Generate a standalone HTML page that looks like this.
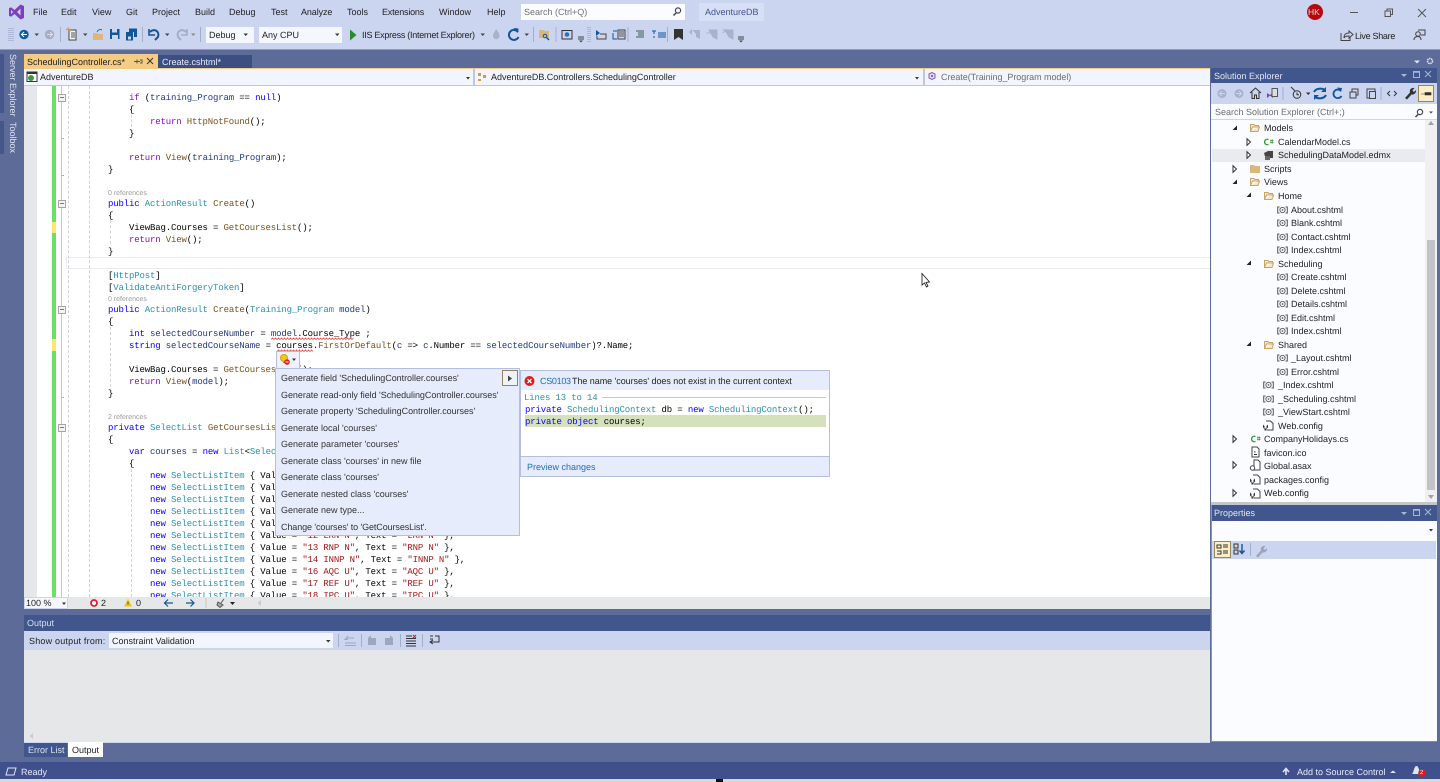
<!DOCTYPE html>
<html><head><meta charset="utf-8"><title>AdventureDB</title>
<style>
html,body{margin:0;padding:0;width:1440px;height:782px;overflow:hidden;background:#e6e7e8}
body{position:relative;font-family:"Liberation Sans",sans-serif;font-size:9px;color:#1e1e1e;text-rendering:geometricPrecision;filter:blur(.3px)}
.b{position:absolute}
.t{position:absolute;white-space:pre;line-height:12px;height:12px}
#code{position:absolute;left:24px;top:86px;width:1186px;height:511px;overflow:hidden;background:#fff}
#code .c{position:absolute;white-space:pre;font-family:"Liberation Mono",monospace;font-size:9px;letter-spacing:-.15px;line-height:12px;height:12px;color:#000;transform:translateY(1px)}
#code .r{position:absolute;font-size:7px;color:#999;line-height:10px;white-space:pre;transform:translateY(2px)}
.k{color:#0000ff}.p{color:#8f08c4}.y{color:#2b91af}.m{color:#74531f}.s{color:#a31515}.v{color:#1f377f}
.mono{font-family:"Liberation Mono",monospace;font-size:9px;letter-spacing:-.15px}
svg{position:absolute;left:0;top:0}
</style></head><body>

<!-- chrome backgrounds -->
<div class="b" style="left:0;top:0;width:1440px;height:49px;background:#ccd5f0"></div>
<div class="b" style="left:0;top:49px;width:1440px;height:1px;background:#8e9bbc"></div>
<div class="b" style="left:0;top:50px;width:1440px;height:712px;background:#5d6b99"></div>
<div class="b" style="left:0;top:762px;width:1440px;height:17px;background:#40508d"></div>
<div class="b" style="left:0;top:779px;width:1440px;height:3px;background:#d8d8d8"></div>

<!-- menu -->
<div class="t" style="left:33px;top:6px">File</div>
<div class="t" style="left:61px;top:6px">Edit</div>
<div class="t" style="left:92px;top:6px">View</div>
<div class="t" style="left:126px;top:6px">Git</div>
<div class="t" style="left:152px;top:6px">Project</div>
<div class="t" style="left:195px;top:6px">Build</div>
<div class="t" style="left:229px;top:6px">Debug</div>
<div class="t" style="left:271px;top:6px">Test</div>
<div class="t" style="left:301px;top:6px;letter-spacing:-.1px">Analyze</div>
<div class="t" style="left:347px;top:6px">Tools</div>
<div class="t" style="left:382px;top:6px;letter-spacing:-.2px">Extensions</div>
<div class="t" style="left:439px;top:6px">Window</div>
<div class="t" style="left:487px;top:6px">Help</div>
<div class="b" style="left:521px;top:4px;width:164px;height:16px;background:#fbfcff"></div>
<div class="t" style="left:524px;top:6px;color:#717171">Search (Ctrl+Q)</div>
<div class="b" style="left:699px;top:3px;width:65px;height:18px;background:#d7dff6"></div>
<div class="t" style="left:705px;top:6px;color:#44548c">AdventureDB</div>
<div class="b" style="left:1307px;top:4px;width:16px;height:16px;border-radius:50%;background:#b5090f"></div>
<div class="t" style="left:1308px;top:6px;color:#f5d5d5;font-size:8.5px">HK</div>

<!-- toolbar -->
<div class="b" style="left:206px;top:27px;width:48px;height:16px;background:#f5f7fe"></div>
<div class="t" style="left:209px;top:29px">Debug</div>
<div class="b" style="left:259px;top:27px;width:83px;height:16px;background:#f5f7fe"></div>
<div class="t" style="left:262px;top:29px">Any CPU</div>
<div class="t" style="left:362px;top:29px;letter-spacing:-.27px">IIS Express (Internet Explorer)</div>
<div class="t" style="left:1355px;top:30px;letter-spacing:-.3px">Live Share</div>

<!-- left rail -->
<div class="b" style="left:0;top:54px;width:4px;height:59px;background:#47568a"></div>
<div class="b" style="left:0;top:121px;width:4px;height:33px;background:#47568a"></div>
<div class="t" style="left:13px;top:54px;transform-origin:0 0;transform:rotate(90deg) translateY(-6px);color:#dfe4f2">Server Explorer</div>
<div class="t" style="left:13px;top:122px;transform-origin:0 0;transform:rotate(90deg) translateY(-6px);color:#dfe4f2">Toolbox</div>

<!-- doc tabs -->
<div class="b" style="left:24px;top:54px;width:134px;height:15px;background:#f5cc84"></div>
<div class="t" style="left:27px;top:56px">SchedulingController.cs*</div>
<div class="b" style="left:158px;top:55px;width:94px;height:13px;background:#3b4f81"></div>
<div class="t" style="left:162px;top:56px;color:#e6eaf6">Create.cshtml*</div>
<div class="b" style="left:24px;top:68px;width:1186px;height:1px;background:#f5cc84"></div>

<!-- nav bar -->
<div class="b" style="left:24px;top:69px;width:1186px;height:16px;background:#f2f5fd"></div>
<div class="b" style="left:24px;top:85px;width:1186px;height:1px;background:#bcc7e2"></div>
<div class="b" style="left:473px;top:69px;width:2px;height:16px;background:#bcc7e2"></div>
<div class="b" style="left:923px;top:69px;width:2px;height:16px;background:#bcc7e2"></div>
<div class="t" style="left:40px;top:71px">AdventureDB</div>
<div class="t" style="left:491px;top:71px;letter-spacing:-.02px">AdventureDB.Controllers.SchedulingController</div>
<div class="t" style="left:941px;top:71px;color:#6d6d6d;letter-spacing:-.05px">Create(Training_Program model)</div>

<!-- editor -->
<div id="code">
<div class="b" style="left:0;top:0;width:13px;height:511px;background:#e6e7e8"></div>
<div class="b" style="left:28px;top:0;width:4px;height:511px;background:#69e264"></div>
<div class="b" style="left:28px;top:136px;width:4px;height:11px;background:#fbe96a"></div>
<div class="b" style="left:28px;top:253px;width:4px;height:12px;background:#fbe96a"></div>
<div class="b" style="left:37px;top:0;width:1px;height:511px;background:#c6c6c6"></div>
<div class="b" style="left:42px;top:171px;width:1150px;height:10px;border:1px solid #e9e9ee;border-right:0"></div>
<div class="b" style="left:44px;top:0;height:511px;border-left:1px dashed #d2d2d2"></div>
<div class="b" style="left:65px;top:0;height:511px;border-left:1px dashed #d2d2d2"></div>
<div class="b" style="left:86px;top:134px;height:24px;border-left:1px dashed #d2d2d2"></div>
<div class="b" style="left:86px;top:241px;height:60px;border-left:1px dashed #d2d2d2"></div>
<div class="b" style="left:107px;top:29px;height:12px;border-left:1px dashed #d2d2d2"></div>
<div class="b" style="left:107px;top:383px;height:128px;border-left:1px dashed #d2d2d2"></div>
<div class="b" style="left:38px;top:52px;width:2px;height:1px;background:#aaa"></div>
<div class="b" style="left:38px;top:89px;width:2px;height:1px;background:#aaa"></div>
<div class="b" style="left:38px;top:311px;width:2px;height:1px;background:#aaa"></div>
<div class="b" style="left:34px;top:8px;width:6px;height:6px;border:1px solid #a5a5a5;background:#f4f4f4"></div>
<div class="b" style="left:34px;top:114px;width:6px;height:6px;border:1px solid #a5a5a5;background:#f4f4f4"></div>
<div class="b" style="left:34px;top:220px;width:6px;height:6px;border:1px solid #a5a5a5;background:#f4f4f4"></div>
<div class="b" style="left:34px;top:338px;width:6px;height:6px;border:1px solid #a5a5a5;background:#f4f4f4"></div>
<div class="b" style="left:36px;top:11px;width:4px;height:1px;background:#777"></div>
<div class="b" style="left:36px;top:117px;width:4px;height:1px;background:#777"></div>
<div class="b" style="left:36px;top:223px;width:4px;height:1px;background:#777"></div>
<div class="b" style="left:36px;top:341px;width:4px;height:1px;background:#777"></div>

<div class="c" style="left:105px;top:5px"><span class="p">if</span> (<span class="v">training_Program</span> == <span class="k">null</span>)</div>
<div class="c" style="left:105px;top:17px">{</div>
<div class="c" style="left:126px;top:29px"><span class="p">return</span> <span class="m">HttpNotFound</span>();</div>
<div class="c" style="left:105px;top:41px">}</div>
<div class="c" style="left:105px;top:65px"><span class="p">return</span> <span class="m">View</span>(<span class="v">training_Program</span>);</div>
<div class="c" style="left:84px;top:77px">}</div>
<div class="r" style="left:84px;top:101px">0 references</div>
<div class="c" style="left:84px;top:111px"><span class="k">public</span> <span class="y">ActionResult</span> <span class="m">Create</span>()</div>
<div class="c" style="left:84px;top:123px">{</div>
<div class="c" style="left:105px;top:135px">ViewBag.Courses = <span class="m">GetCoursesList</span>();</div>
<div class="c" style="left:105px;top:147px"><span class="p">return</span> <span class="m">View</span>();</div>
<div class="c" style="left:84px;top:159px">}</div>
<div class="c" style="left:84px;top:183px">[<span class="y">HttpPost</span>]</div>
<div class="c" style="left:84px;top:195px">[<span class="y">ValidateAntiForgeryToken</span>]</div>
<div class="r" style="left:84px;top:207px">0 references</div>
<div class="c" style="left:84px;top:217px"><span class="k">public</span> <span class="y">ActionResult</span> <span class="m">Create</span>(<span class="y">Training_Program</span> <span class="v">model</span>)</div>
<div class="c" style="left:84px;top:229px">{</div>
<div class="c" style="left:105px;top:241px"><span class="k">int</span> <span class="v">selectedCourseNumber</span> = <span class="v">model</span>.Course_Type ;</div>
<div class="c" style="left:105px;top:253px"><span class="k">string</span> <span class="v">selectedCourseName</span> = courses.<span class="m">FirstOrDefault</span>(<span class="v">c</span> =&gt; <span class="v">c</span>.Number == <span class="v">selectedCourseNumber</span>)?.Name;</div>
<div class="c" style="left:105px;top:277px">ViewBag.Courses = <span class="m">GetCoursesList</span>();</div>
<div class="c" style="left:105px;top:289px"><span class="p">return</span> <span class="m">View</span>(<span class="v">model</span>);</div>
<div class="c" style="left:84px;top:301px">}</div>
<div class="r" style="left:84px;top:325px">2 references</div>
<div class="c" style="left:84px;top:335px"><span class="k">private</span> <span class="y">SelectList</span> <span class="m">GetCoursesList</span>()</div>
<div class="c" style="left:84px;top:347px">{</div>
<div class="c" style="left:105px;top:359px"><span class="k">var</span> <span class="v">courses</span> = <span class="k">new</span> <span class="y">List</span>&lt;<span class="y">SelectListItem</span>&gt;()</div>
<div class="c" style="left:105px;top:371px">{</div>
<div class="c" style="left:126px;top:383px"><span class="k">new</span> <span class="y">SelectListItem</span> { Value = <span class="s">"1 ABC N"</span>, Text = <span class="s">"ABC N"</span> },</div>
<div class="c" style="left:126px;top:395px"><span class="k">new</span> <span class="y">SelectListItem</span> { Value = <span class="s">"2 ABC U"</span>, Text = <span class="s">"ABC U"</span> },</div>
<div class="c" style="left:126px;top:407px"><span class="k">new</span> <span class="y">SelectListItem</span> { Value = <span class="s">"3 DEF N"</span>, Text = <span class="s">"DEF N"</span> },</div>
<div class="c" style="left:126px;top:419px"><span class="k">new</span> <span class="y">SelectListItem</span> { Value = <span class="s">"4 DEF U"</span>, Text = <span class="s">"DEF U"</span> },</div>
<div class="c" style="left:126px;top:431px"><span class="k">new</span> <span class="y">SelectListItem</span> { Value = <span class="s">"5 GHI N"</span>, Text = <span class="s">"GHI N"</span> },</div>
<div class="c" style="left:126px;top:443px"><span class="k">new</span> <span class="y">SelectListItem</span> { Value = <span class="s">"12 LRN N"</span>, Text = <span class="s">"LRN N"</span> },</div>
<div class="c" style="left:126px;top:455px"><span class="k">new</span> <span class="y">SelectListItem</span> { Value = <span class="s">"13 RNP N"</span>, Text = <span class="s">"RNP N"</span> },</div>
<div class="c" style="left:126px;top:467px"><span class="k">new</span> <span class="y">SelectListItem</span> { Value = <span class="s">"14 INNP N"</span>, Text = <span class="s">"INNP N"</span> },</div>
<div class="c" style="left:126px;top:479px"><span class="k">new</span> <span class="y">SelectListItem</span> { Value = <span class="s">"16 AQC U"</span>, Text = <span class="s">"AQC U"</span> },</div>
<div class="c" style="left:126px;top:491px"><span class="k">new</span> <span class="y">SelectListItem</span> { Value = <span class="s">"17 REF U"</span>, Text = <span class="s">"REF U"</span> },</div>
<div class="c" style="left:126px;top:503px"><span class="k">new</span> <span class="y">SelectListItem</span> { Value = <span class="s">"18 IPC U"</span>, Text = <span class="s">"IPC U"</span> },</div>
</div>

<!-- editor status -->
<div class="b" style="left:24px;top:597px;width:1186px;height:12px;background:#e6e7e8"></div>
<div class="b" style="left:24px;top:597px;width:44px;height:12px;background:#f6f7fd;box-shadow:inset 0 0 0 1px #ccd5f0"></div>
<div class="t" style="left:26px;top:597px">100 %</div>
<div class="t" style="left:101px;top:597px">2</div>
<div class="t" style="left:136px;top:597px">0</div>

<!-- output panel -->
<div class="b" style="left:24px;top:615px;width:1186px;height:16px;background:#40568d"></div>
<div class="t" style="left:27px;top:617px;color:#d9dfee">Output</div>
<div class="b" style="left:24px;top:631px;width:1186px;height:19px;background:#ccd5f0"></div>
<div class="t" style="left:29px;top:635px;letter-spacing:.2px">Show output from:</div>
<div class="b" style="left:109px;top:633px;width:224px;height:15px;background:#f2f5fd"></div>
<div class="t" style="left:112px;top:635px">Constraint Validation</div>
<div class="b" style="left:24px;top:650px;width:1186px;height:92px;background:#e6e7e8"></div>
<div class="b" style="left:24px;top:742px;width:1186px;height:1px;background:#ccd5f0"></div>
<div class="b" style="left:24px;top:743px;width:43px;height:14px;background:#40568d"></div>
<div class="t" style="left:28px;top:744px;color:#dfe4f2">Error List</div>
<div class="b" style="left:68px;top:742px;width:35px;height:15px;background:#fff"></div>
<div class="t" style="left:72px;top:744px">Output</div>

<!-- solution explorer -->
<div class="b" style="left:1211px;top:68px;width:226px;height:435px;background:#fbfcff"></div>
<div class="b" style="left:1211px;top:68px;width:226px;height:15px;background:#40568d"></div>
<div class="t" style="left:1214px;top:70px;color:#e3e7f3">Solution Explorer</div>
<div class="b" style="left:1211px;top:83px;width:226px;height:21px;background:#ccd5f0"></div>
<div class="t" style="left:1215px;top:106px;color:#6d6d6d">Search Solution Explorer (Ctrl+;)</div>
<div class="b" style="left:1211px;top:119px;width:226px;height:1px;background:#ccd5f0"></div>
<div class="b" style="left:1212px;top:149px;width:213px;height:13px;background:#eaebf0"></div>
<div class="b" style="left:1425px;top:120px;width:12px;height:382px;background:#f0f0f3"></div>
<div class="b" style="left:1427px;top:240px;width:8px;height:250px;background:#c2c3c9"></div>
<div class="b" style="left:1211px;top:502px;width:226px;height:3px;background:#c4c6ce"></div>

<div class="t" style="left:1264px;top:122px">Models</div>
<div class="t" style="left:1278px;top:136px">CalendarModel.cs</div>
<div class="t" style="left:1278px;top:149px">SchedulingDataModel.edmx</div>
<div class="t" style="left:1264px;top:163px">Scripts</div>
<div class="t" style="left:1264px;top:176px">Views</div>
<div class="t" style="left:1278px;top:190px">Home</div>
<div class="t" style="left:1291px;top:204px">About.cshtml</div>
<div class="t" style="left:1291px;top:217px">Blank.cshtml</div>
<div class="t" style="left:1291px;top:231px">Contact.cshtml</div>
<div class="t" style="left:1291px;top:244px">Index.cshtml</div>
<div class="t" style="left:1278px;top:258px">Scheduling</div>
<div class="t" style="left:1291px;top:271px">Create.cshtml</div>
<div class="t" style="left:1291px;top:285px">Delete.cshtml</div>
<div class="t" style="left:1291px;top:298px">Details.cshtml</div>
<div class="t" style="left:1291px;top:312px">Edit.cshtml</div>
<div class="t" style="left:1291px;top:325px">Index.cshtml</div>
<div class="t" style="left:1278px;top:339px">Shared</div>
<div class="t" style="left:1291px;top:352px">_Layout.cshtml</div>
<div class="t" style="left:1291px;top:366px">Error.cshtml</div>
<div class="t" style="left:1278px;top:379px">_Index.cshtml</div>
<div class="t" style="left:1278px;top:393px">_Scheduling.cshtml</div>
<div class="t" style="left:1278px;top:406px">_ViewStart.cshtml</div>
<div class="t" style="left:1278px;top:420px">Web.config</div>
<div class="t" style="left:1264px;top:433px">CompanyHolidays.cs</div>
<div class="t" style="left:1264px;top:447px">favicon.ico</div>
<div class="t" style="left:1264px;top:460px">Global.asax</div>
<div class="t" style="left:1264px;top:474px">packages.config</div>
<div class="t" style="left:1264px;top:487px">Web.config</div>

<!-- properties -->
<div class="b" style="left:1211px;top:505px;width:226px;height:237px;background:#fbfcff"></div>
<div class="b" style="left:1211px;top:505px;width:226px;height:16px;background:#40568d"></div>
<div class="t" style="left:1214px;top:507px;color:#e3e7f3">Properties</div>
<div class="b" style="left:1212px;top:541px;width:224px;height:18px;background:#ccd5f0"></div>
<div class="b" style="left:1211px;top:741px;width:226px;height:1px;background:#8a8a8a"></div>
<div class="b" style="left:1211px;top:505px;width:1px;height:237px;background:#8f95a8"></div>

<!-- status bar -->
<div class="t" style="left:21px;top:766px;color:#e6eaf6">Ready</div>
<div class="t" style="left:1297px;top:766px;color:#e6eaf6">Add to Source Control</div>

<svg width="1440" height="782" viewBox="0 0 1440 782" fill="none">
<defs>
<symbol id="of" viewBox="0 0 10 10" overflow="visible"><path d="M.5 8.5V1.5H4L5 2.5H8.5V4M.5 8.5H8L9.5 4H2.5L.5 8.5Z" stroke="#c9a368" fill="#f6e7c8"/></symbol>
<symbol id="cf" viewBox="0 0 10 10" overflow="visible"><path d="M0 1H4L5 2H10V9H0Z" fill="#dcb67a"/></symbol>
<symbol id="rz" viewBox="0 0 11 10" overflow="visible"><path d="M2.5 2H.7V8H2.5M8.5 2H10.3V8H8.5" stroke="#555"/><circle cx="5.5" cy="5" r="2.6" stroke="#666"/><circle cx="5.5" cy="5" r=".9" fill="#666"/></symbol>
<symbol id="cfg" viewBox="0 0 11 11" overflow="visible"><path d="M3 1H7.5L10 3.5V10H4" stroke="#444" fill="#fff"/><path d="M0 4.5L1.5 6V8.5H3.5V6L5 4.5V7.5L3.5 9V10.5H1.5V9L0 7.5Z" fill="#333"/></symbol>
<symbol id="cs" viewBox="0 0 10 10" overflow="visible"><path d="M4.5 2.6A2.7 2.7 0 1 0 4.5 7.4" stroke="#3a9b35" stroke-width="1.3"/><path d="M6 3.5H9.5M6 5.5H9.5M7 2.5V6.5M8.5 2.5V6.5" stroke="#3a9b35" stroke-width=".7"/></symbol>
<symbol id="open" viewBox="0 0 6 6" overflow="visible"><path d="M5 0.5V5H.5Z" fill="#222"/></symbol>
<symbol id="shut" viewBox="0 0 6 8" overflow="visible"><path d="M1 .7L4.5 4L1 7.3Z" stroke="#333" fill="#fff"/></symbol>
</defs>

<!-- logo -->
<path d="M20.5 4.5L24 6V18L20.5 19.5L14.5 14L11 16.8L9 15.8V8.2L11 7.2L14.5 10ZM20.5 8.5L17 12L20.5 15.5ZM11 9.8V14.2L13 12Z" fill="#7d3fbf" fill-rule="evenodd"/>

<!-- search -->
<circle cx="678" cy="10.5" r="2.6" stroke="#444" stroke-width="1.2"/><path d="M676 13L673.5 15.5" stroke="#444" stroke-width="1.5"/>

<!-- window controls -->
<path d="M1350 12.5H1358" stroke="#555"/>
<path d="M1385 11h5.500v5.500H1385ZM1387 11V9h5.500v5.500h-2" stroke="#555"/>
<path d="M1418 9L1426 17M1426 9L1418 17" stroke="#555"/>

<!-- toolbar grip -->
<path d="M9 28V41M11 28V41M13 28V41" stroke="#8f9ac0" stroke-dasharray="1 1"/>
<circle cx="24" cy="34.5" r="4.7" fill="#0e5c9e"/><path d="M27 34.5H22M24 32L21.5 34.5L24 37" stroke="#fff"/>
<path d="M34.5 33.5H39L36.7 36Z" fill="#444"/>
<circle cx="49.5" cy="34.5" r="4.7" fill="#a5adc3"/><path d="M47 34.5H52M50 32L52.5 34.5L50 37" stroke="#dde"/>
<path d="M60.5 27V42" stroke="#a3aecb"/>
<path d="M69 30H76V40H69Z" stroke="#444" fill="#f4f4f4"/><path d="M71 33H75M71 35H75M71 37H75" stroke="#555"/><path d="M68 27.5L70 31.5M66 29.5H71" stroke="#d99c33" stroke-width="1.3"/>
<path d="M83 33.5H87.5L85.2 36Z" fill="#444"/>
<path d="M93 40V33H97L98 34H103V40Z" fill="#dcb67a"/><path d="M97 32C98 29.5 100 29 102 30" stroke="#0e70c0"/>
<path d="M110 29H119.5V39H110Z" fill="#11559a"/><rect x="112" y="29" width="5" height="3.5" fill="#ccd5f0"/><rect x="112" y="35" width="6" height="4" fill="#ccd5f0"/>
<path d="M126 32H133V40.5H126Z" fill="#11559a"/><path d="M129 28.5H137V37H134V32H129Z" fill="#11559a"/><rect x="128" y="36.5" width="3" height="3" fill="#ccd5f0"/>
<path d="M142.5 27V42" stroke="#a3aecb"/>
<path d="M150 32C154 28 160 31 158 37L155 40" stroke="#11559a" stroke-width="2"/><path d="M149 29V35H155" stroke="#11559a" stroke-width="1.6"/>
<path d="M165 33.5H169.5L167.2 36Z" fill="#444"/>
<path d="M186 32C182 28 176 31 178 37L181 40" stroke="#a5adc3" stroke-width="2"/><path d="M187 29V35H181" stroke="#a5adc3" stroke-width="1.6"/>
<path d="M191 33.5H195.5L193.2 36Z" fill="#888"/>
<path d="M200.5 27V42" stroke="#a3aecb"/>
<path d="M243.5 33.5H248L245.7 36Z" fill="#333"/>
<path d="M335 33.5H339.5L337.2 36Z" fill="#333"/>
<path d="M350 29.5L356.5 35L350 40.5Z" fill="#2b8a2b"/>
<path d="M480.5 33.5H485L482.7 36Z" fill="#444"/>
<path d="M496 29C498 32 499.500 33 499.500 36A3 3 0 0 1 493 36C493 33 495 32 496 29Z" fill="#aab2c8"/>
<path d="M518 32A5 5 0 1 0 518.500 37" stroke="#11559a" stroke-width="2"/><path d="M513.500 28L518.500 28.500L518 33" fill="#11559a"/>
<path d="M524.500 33.500H529L526.700 36Z" fill="#444"/>
<path d="M533.500 27V42" stroke="#a3aecb"/>
<path d="M539 30H544L545 31H549V38H539Z" fill="#dcb67a"/><circle cx="545" cy="36" r="1.800" stroke="#11559a"/><path d="M546.500 37.500L549 40" stroke="#11559a" stroke-width="1.400"/>
<path d="M556 27V42" stroke="#a3aecb"/>
<rect x="562" y="30.500" width="10" height="8.500" stroke="#333"/><circle cx="567" cy="34.500" r="2.300" fill="#2674b5"/>
<path d="M578 37H584M578 39H584" stroke="#444"/><path d="M579 40.500H583L581 42.500Z" fill="#444"/>
<path d="M588 27V42M590 27V42" stroke="#8f9ac0" stroke-dasharray="1 1"/>
<path d="M596 30L600 33L596 36Z" fill="#11559a"/><path d="M600 34H606V39H597V36" stroke="#444"/>
<path d="M613 33V39H617M613 31H617" stroke="#11559a"/><rect x="618" y="30" width="7" height="9" stroke="#444"/><path d="M619 32H624M619 34H624M619 36H624" stroke="#555"/>
<path d="M628 27V42" stroke="#a3aecb"/>
<path d="M636 31H644M638 33H644M638 35H644M636 37H644" stroke="#3e5e4e"/>
<path d="M652 31H656M654 31V34M658 33H666M658 35H666M658 37H666M654 36V38" stroke="#11559a"/>
<path d="M667.500 27V42" stroke="#a3aecb"/>
<path d="M674 29H683V40L678.500 37L674 40Z" fill="#333"/>
<path d="M692 30H700V39L696 37V34M689 32L692 29L692 35Z" fill="#a9b2c9"/>
<path d="M709 30H717V39L713 37ZM706 33H710" fill="#a9b2c9" stroke="#a9b2c9"/>
<path d="M725 30H733V39L729 37ZM723 29L727 33M727 29L723 33" fill="#a9b2c9" stroke="#a9b2c9"/>
<path d="M738 37H744M738 39H744" stroke="#444"/><path d="M739 40.500H743L741 42.500Z" fill="#444"/>

<!-- live share & feedback -->
<path d="M1341 33V40.500H1350V37" stroke="#444"/><path d="M1344 38C1344 34 1346 33 1349 33V31L1353 34.500L1349 38V36C1347 36 1345 36 1344 38Z" stroke="#444" fill="#ccd5f0"/>
<path d="M1418 30H1425V35H1421" stroke="#444"/><circle cx="1418" cy="34" r="2.300" stroke="#444"/><path d="M1414 40C1414 37 1416 36.500 1418 36.500C1420 36.500 1421 38 1421 40" stroke="#444"/>

<!-- top right arrows -->
<path d="M1414 60.500H1420L1417 63.500Z" fill="#dfe4f2"/>
<circle cx="1430" cy="61" r="2.500" stroke="#dfe4f2" stroke-width="1.500" stroke-dasharray="1.500 .6"/>

<!-- tab icons -->
<path d="M134 61.500H137M137 59.500V63.500M137 61.500H140M140 60H142V63H140" stroke="#555"/>
<path d="M147 58L153 64M153 58L147 64" stroke="#333"/>

<!-- nav bar icons -->
<rect x="27" y="72" width="10" height="9.500" fill="#fff" stroke="#333"/><rect x="27" y="72" width="10" height="2" fill="#333"/><circle cx="31" cy="78" r="3" fill="#3d9a43"/>
<path d="M466 77H470L468 79.500Z" fill="#333"/>
<path d="M915 77H919L917 79.500Z" fill="#333"/>
<path d="M478 73H481V76H478ZM483 75H486V78H483ZM478 79H481V81H478Z" fill="#d79a3a"/>
<path d="M929 74L932 72.500L935 74V78L932 79.500L929 78Z" stroke="#7d5bb5" fill="#e9def8"/><circle cx="932" cy="76" r="1.100" fill="#7d5bb5"/>

<!-- squiggles -->
<path d="M271 339.500l1.500-1.500 1.500 1.500 1.500-1.500 1.500 1.500 1.500-1.500 1.500 1.500 1.500-1.500 1.500 1.500 1.500-1.500 1.500 1.500 1.500-1.500 1.500 1.500 1.500-1.500 1.500 1.500 1.500-1.500 1.500 1.500 1.500-1.500 1.500 1.500 1.500-1.500 1.500 1.500 1.500-1.500 1.500 1.500 1.500-1.500 1.500 1.500 1.500-1.500 1.500 1.500 1.500-1.500 1.500 1.500 1.500-1.500 1.500 1.500 1.500-1.500 1.500 1.500 1.500-1.500 1.500 1.500 1.500-1.500 1.500 1.500 1.500-1.500 1.500 1.500 1.500-1.500 1.500 1.500 1.500-1.500 1.500 1.500 1.500-1.500 1.500 1.500 1.500-1.500 1.500 1.500 1.500-1.500 1.500 1.500 1.500-1.500 1.500 1.500 1.500-1.500 1.500 1.500 1.500-1.500 1.500 1.500 1.500-1.500" stroke="#e8534e" stroke-width=".8"/>
<path d="M277 351.500l1.500-1.500 1.500 1.500 1.500-1.500 1.500 1.500 1.500-1.500 1.500 1.500 1.500-1.500 1.500 1.500 1.500-1.500 1.500 1.500 1.500-1.500 1.500 1.500 1.500-1.500 1.500 1.500 1.500-1.500 1.500 1.500 1.500-1.500 1.500 1.500 1.500-1.500 1.500 1.500 1.500-1.500 1.500 1.500 1.500-1.500 1.500 1.500" stroke="#e8534e" stroke-width=".8"/>

<!-- editor status icons -->
<path d="M62 602.500H66L64 605Z" fill="#333"/>
<circle cx="94" cy="603" r="3" stroke="#d8232a" stroke-width="1.800" fill="#fff"/>
<path d="M128 599L132 606.500H124Z" fill="#f2c40f"/><path d="M128 601.500V604.500" stroke="#333" stroke-width=".8"/>
<path d="M173 603H164M168 599.500L164.500 603L168 606.500" stroke="#11559a" stroke-width="1.200"/>
<path d="M186 603H194M190.500 599.500L194 603L190.500 606.500" stroke="#11559a" stroke-width="1.200"/>
<path d="M206 598V608" stroke="#c6c6c6"/>
<path d="M224 599L221 603M218 602L223 605L220 607.500L217 605Z" stroke="#555" fill="#aaa"/>
<path d="M230 602H235L232.500 605Z" fill="#222"/>
<path d="M261 600V606L257.500 603Z" fill="#ccc"/>

<!-- output toolbar icons -->
<path d="M326 640H330.500L328.200 642.500Z" fill="#333"/>
<path d="M338.500 634V647M361.500 634V647M400.500 634V647M422.500 634V647" stroke="#a3aecb"/>
<path d="M348 636L345 639.500H348M347 638H354M345 643H356M345 645.500H356" stroke="#9ea7be"/>
<path d="M368 638L371 635V638H376V645H368Z" fill="#9ea7be"/>
<path d="M385 638H390V635L393 638V645H385Z" fill="#9ea7be"/>
<path d="M406 636H412M406 638.500H416M406 641H416M406 643.500H416M406 646H416" stroke="#333"/><path d="M413 635L416 638M416 635L413 638" stroke="#c22"/>
<path d="M430 636H433M430 639H433M435 636H439V642H431M433 640L430 642L433 644" stroke="#333"/>

<!-- output scroll -->
<path d="M33 733V739L29.500 736Z" fill="#ccc"/>

<!-- solution explorer icons -->
<path d="M1401 74H1407L1404 77Z" fill="#a8b5d6"/>
<rect x="1413.500" y="71.500" width="6" height="6" stroke="#a8b5d6"/><path d="M1413 72H1420" stroke="#a8b5d6" stroke-width="1.500"/>
<path d="M1425 71L1431 77M1431 71L1425 77" stroke="#a8b5d6"/>
<circle cx="1222" cy="93.500" r="4.500" fill="#a9b2c9"/><path d="M1225 93.500H1220M1222 91L1219.500 93.500L1222 96" stroke="#ccd5f0"/>
<circle cx="1239" cy="93.500" r="4.500" fill="#a9b2c9"/><path d="M1236 93.500H1241M1239 91L1241.500 93.500L1239 96" stroke="#ccd5f0"/>
<path d="M1250 93L1255.500 88L1261 93M1252 92V98.500H1254.500V95H1256.500V98.500H1259V92" stroke="#333"/>
<path d="M1267 93L1270 95L1273 92.500V98L1270 95.500L1267 98Z" fill="#7d3fbf"/><rect x="1272" y="88.500" width="5.500" height="8" stroke="#555" fill="#ddd"/>
<path d="M1283 87V100M1381 87V100" stroke="#a3aecb"/>
<circle cx="1297" cy="94.500" r="3.800" stroke="#333"/><path d="M1297 92.500V94.800H1299M1291 87L1295 91" stroke="#333"/>
<path d="M1306 92.500H1310.500L1308.200 95Z" fill="#333"/>
<path d="M1314 92C1316 88 1322 88 1325 90M1326 95C1324 99 1318 99 1315 97" stroke="#11559a" stroke-width="2"/><path d="M1326 87V92H1321ZM1314 100V95H1319Z" fill="#11559a"/>
<path d="M1341 91A4.300 4.300 0 1 0 1341.500 96" stroke="#11559a" stroke-width="1.800"/><path d="M1337 87.500L1342 88L1341 92Z" fill="#11559a"/>
<rect x="1350" y="92" width="6" height="6" stroke="#444"/><path d="M1352 92V89H1358V95H1356" stroke="#444"/>
<rect x="1367" y="89" width="8" height="9" stroke="#444"/><rect x="1369.500" y="91.500" width="6" height="7" stroke="#444" fill="#ccd5f0"/>
<path d="M1390 91L1387.500 93.500L1390 96M1394 91L1396.500 93.500L1394 96" stroke="#333"/>
<path d="M1405 98L1410 92.500C1409 89 1412 87.500 1414.500 88L1412.500 90.500L1414 92L1416 90C1416.500 93 1414 95 1411.500 94.500L1407 99.500Z" fill="#333"/>
<rect x="1418.500" y="85.500" width="15" height="16" stroke="#9d8450" fill="#fbeec9"/>
<path d="M1421 94H1425M1425 92.500H1431V95H1425Z" fill="#333" stroke="#333" stroke-width=".6"/>
<circle cx="1420" cy="112" r="2.600" stroke="#444" stroke-width="1.200"/><path d="M1418 114.500L1415.500 117" stroke="#444" stroke-width="1.500"/>
<path d="M1429 111.500H1433L1431 113.500Z" fill="#444"/>
<path d="M1431 121L1428 125H1434Z" fill="#9ea1aa"/>
<path d="M1428 495H1434L1431 499Z" fill="#9ea1aa"/>

<!-- tree icons -->
<use href="#open" x="1232" y="125" width="6" height="6"/><use href="#of" x="1250" y="123" width="10" height="10"/>
<use href="#shut" x="1246" y="138" width="6" height="8"/><use href="#cs" x="1264" y="137" width="10" height="10"/>
<use href="#shut" x="1246" y="151" width="6" height="8"/>
<path d="M1264 153L1268 151V160H1266ZM1268 151H1273V158H1268Z" fill="#444"/><path d="M1265 156H1270V160H1265Z" fill="#666"/>
<use href="#shut" x="1232" y="165" width="6" height="8"/><use href="#cf" x="1250" y="164" width="10" height="10"/>
<use href="#open" x="1232" y="179" width="6" height="6"/><use href="#of" x="1250" y="177" width="10" height="10"/>
<use href="#open" x="1246" y="192" width="6" height="6"/><use href="#of" x="1264" y="191" width="10" height="10"/>
<use href="#rz" x="1277" y="205" width="11" height="10"/>
<use href="#rz" x="1277" y="218" width="11" height="10"/>
<use href="#rz" x="1277" y="232" width="11" height="10"/>
<use href="#rz" x="1277" y="245" width="11" height="10"/>
<use href="#open" x="1246" y="260" width="6" height="6"/><use href="#of" x="1264" y="259" width="10" height="10"/>
<use href="#rz" x="1277" y="272" width="11" height="10"/>
<use href="#rz" x="1277" y="286" width="11" height="10"/>
<use href="#rz" x="1277" y="299" width="11" height="10"/>
<use href="#rz" x="1277" y="313" width="11" height="10"/>
<use href="#rz" x="1277" y="326" width="11" height="10"/>
<use href="#open" x="1246" y="341" width="6" height="6"/><use href="#of" x="1264" y="340" width="10" height="10"/>
<use href="#rz" x="1277" y="353" width="11" height="10"/>
<use href="#rz" x="1277" y="367" width="11" height="10"/>
<use href="#rz" x="1263" y="380" width="11" height="10"/>
<use href="#rz" x="1263" y="394" width="11" height="10"/>
<use href="#rz" x="1263" y="407" width="11" height="10"/>
<use href="#cfg" x="1263" y="420" width="11" height="11"/>
<use href="#shut" x="1232" y="435" width="6" height="8"/><use href="#cs" x="1251" y="434" width="10" height="10"/>
<path d="M1252 447H1257L1259 449V457H1252Z" stroke="#444" fill="#fff"/><path d="M1254 452H1255.500M1254 454.500H1257" stroke="#333"/>
<use href="#shut" x="1232" y="461" width="6" height="8"/>
<path d="M1254 460H1258L1260 462V470H1254Z" stroke="#444" fill="#fff"/><circle cx="1252.500" cy="468" r="2.200" stroke="#444" fill="#fff"/>
<use href="#cfg" x="1250" y="474" width="11" height="11"/>
<use href="#shut" x="1232" y="489" width="6" height="8"/><use href="#cfg" x="1250" y="488" width="11" height="11"/>

<!-- properties icons -->
<path d="M1401 512H1407L1404 515Z" fill="#a8b5d6"/>
<rect x="1413.500" y="509.500" width="6" height="6" stroke="#a8b5d6"/><path d="M1413 510H1420" stroke="#a8b5d6" stroke-width="1.500"/>
<path d="M1425 509L1431 515M1431 509L1425 515" stroke="#a8b5d6"/>
<path d="M1429 529H1433L1431 531.500Z" fill="#333"/>
<rect x="1214.500" y="541.500" width="16" height="16" stroke="#9d8450" fill="#fbeec9"/>
<path d="M1217 545H1221V548H1217ZM1217 551H1221V554H1217M1223 545H1228M1223 547H1228M1223 551H1228M1223 553H1228" stroke="#333"/>
<path d="M1234 544H1238V548H1234ZM1234 550H1238V554H1234Z" stroke="#333"/><path d="M1242 544V553M1239.500 550.500L1242 553.500L1244.500 550.500" stroke="#11559a" stroke-width="1.400"/>
<path d="M1250.500 543V556" stroke="#a3aecb"/>
<path d="M1256 556L1261 550.500C1260 547 1263 545.500 1265.500 546L1263.500 548.500L1265 550L1267 548C1267.500 551 1265 553 1262.500 552.500L1258 557.500Z" fill="#9ea3b5"/>

<!-- status bar icons -->
<path d="M6 775H14L16 768H8Z" stroke="#dfe4f2"/>
<path d="M1286 775V770M1283 772L1286 768.500L1289 772" stroke="#dfe4f2" stroke-width="1.600"/>
<path d="M1390 773L1393 770.500L1396 773Z" fill="#dfe4f2"/>
<path d="M1412 774C1414 772 1414 766 1416.500 766C1419 766 1419 772 1421 774Z" fill="#dfe4f2"/>
<circle cx="1422" cy="773" r="3.800" fill="#e01b1b"/>

<!-- mouse pointer -->
<path d="M922 273.500V285L924.500 283L926.500 287L928 286L926 282.500L929.500 282Z" fill="#fff" stroke="#111" stroke-width=".8"/>
<path d="M716 779H723V782H716Z" fill="#111"/>
</svg>
<div class="t" style="left:1420px;top:768px;color:#fff;font-size:6px;line-height:10px">2</div>

<!-- light bulb -->
<div class="b" style="left:276px;top:351px;width:22px;height:16px;background:#eef2fc;border:1px solid #b4bedf"></div>
<!-- quick action menu -->
<div class="b" style="left:275px;top:368px;width:245px;height:168px;background:#e7ecfc;border:1px solid #b4bedf;box-sizing:border-box"></div>
<div class="t" style="left:281px;top:372px;color:#333;letter-spacing:-.04px">Generate field 'SchedulingController.courses'</div>
<div class="t" style="left:281px;top:389px;color:#333;letter-spacing:-.04px">Generate read-only field 'SchedulingController.courses'</div>
<div class="t" style="left:281px;top:405px;color:#333;letter-spacing:-.04px">Generate property 'SchedulingController.courses'</div>
<div class="t" style="left:281px;top:422px;color:#333">Generate local 'courses'</div>
<div class="t" style="left:281px;top:438px;color:#333">Generate parameter 'courses'</div>
<div class="t" style="left:281px;top:455px;color:#333">Generate class 'courses' in new file</div>
<div class="t" style="left:281px;top:471px;color:#333">Generate class 'courses'</div>
<div class="t" style="left:281px;top:488px;color:#333">Generate nested class 'courses'</div>
<div class="t" style="left:281px;top:504px;color:#333">Generate new type...</div>
<div class="t" style="left:281px;top:521px;color:#333;letter-spacing:-.1px">Change 'courses' to 'GetCoursesList'.</div>
<div class="b" style="left:502px;top:370px;width:16px;height:16px;background:#f0f2fa;border:1px solid #94835a;box-sizing:border-box"></div>
<!-- preview panel -->
<div class="b" style="left:520px;top:370px;width:310px;height:107px;background:#e7ecfc;border:1px solid #b4bedf;box-sizing:border-box"></div>
<div class="b" style="left:521px;top:390px;width:308px;height:66px;background:#fff"></div>
<div class="b" style="left:521px;top:456px;width:308px;height:1px;background:#b4bedf"></div>
<div class="t" style="left:540px;top:375px;color:#1a6fb5;letter-spacing:-.3px">CS0103</div>
<div class="t" style="left:572px;top:375px;color:#222;letter-spacing:-.05px">The name 'courses' does not exist in the current context</div>
<div class="t mono" style="left:524px;top:392px;color:#2b91af">Lines 13 to 14</div>
<div class="b" style="left:602px;top:397px;width:224px;height:1px;background:#c8c8c8"></div>
<div class="b" style="left:525px;top:415px;width:301px;height:12px;background:#d5e0bc"></div>
<div class="t mono" style="left:525px;top:404px;color:#000"><span class="k">private</span> <span class="y">SchedulingContext</span> db = <span class="k">new</span> <span class="y">SchedulingContext</span>();</div>
<div class="t mono" style="left:525px;top:416px;color:#000"><span class="k">private</span> <span class="k">object</span> courses;</div>
<div class="t" style="left:527px;top:461px;color:#1a6fb5">Preview changes</div>
<svg width="1440" height="782" viewBox="0 0 1440 782" fill="none" style="pointer-events:none">
<circle cx="284" cy="358" r="3.500" fill="#f5c518" stroke="#d9a300"/><path d="M283 362.500H286" stroke="#b58a00"/>
<circle cx="287" cy="362" r="2.800" fill="#e01b1b"/><path d="M285.500 362H288.500" stroke="#fff"/>
<path d="M292 358.500H296L294 361Z" fill="#333"/>
<path d="M508 375.500L512 378.500L508 381.500Z" fill="#444"/>
<circle cx="529.500" cy="381" r="5" fill="#e01b1b"/><path d="M527.500 379L531.500 383M531.500 379L527.500 383" stroke="#fff" stroke-width="1.300"/>
</svg>
</body></html>
